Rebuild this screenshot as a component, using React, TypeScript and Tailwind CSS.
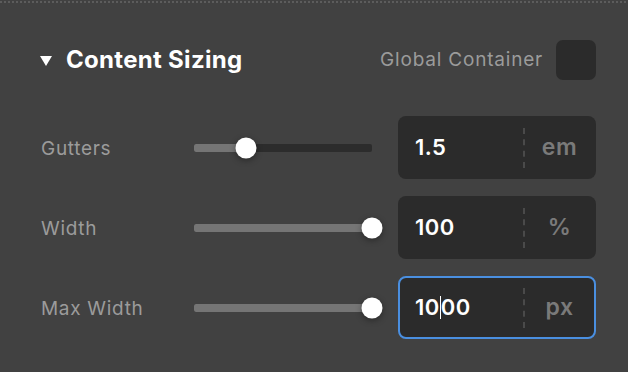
import React from 'react';

const font = { fontFamily: 'Inter, "Liberation Sans", sans-serif' };

type Row = { label: string; value: string; unit: string; pct: number; focused?: boolean };

const rows: Row[] = [
  { label: 'Gutters', value: '1.5', unit: 'em', pct: 29 },
  { label: 'Width', value: '100', unit: '%', pct: 100 },
  { label: 'Max Width', value: '1000', unit: 'px', pct: 100, focused: true },
];

const Slider: React.FC<{ pct: number }> = ({ pct }) => (
  <div className="relative w-[178px] h-[8px] rounded-[2px] bg-[#2c2c2c]">
    <div className="h-full rounded-[2px] bg-[#757575]" style={{ width: `${pct}%` }} />
    <div
      className="absolute top-1/2 w-[21px] h-[21px] -translate-x-1/2 -translate-y-1/2 rounded-full bg-white shadow-[0_2px_6px_rgba(0,0,0,0.35)]"
      style={{ left: `${pct}%` }}
    />
  </div>
);

const App: React.FC = () => {
  return (
    <div className="w-[628px] h-[372px] bg-[#414141] relative overflow-hidden" style={font}>
      {/* linea punteada superior */}
      <div className="h-[4px] pt-[1px]">
        <div className="h-[2px] w-full bg-[repeating-linear-gradient(90deg,#5c5c5c_0_2px,transparent_2px_4px)]" />
      </div>

      <div className="pl-[40px] pr-[32px] pt-[36px]">
        {/* Cabecera */}
        <div className="flex items-center justify-between h-[40px]">
          <div className="flex items-center gap-[14px]">
            <svg width="12" height="10" viewBox="0 0 12 10" className="mt-[1px]">
              <polygon points="0,0 12,0 6,10" fill="#ffffff" />
            </svg>
            <span className="text-white text-[24px] font-bold tracking-[0.3px]">Content Sizing</span>
          </div>
          <div className="flex items-center gap-[13px]">
            <span className="text-[#9b9b9b] text-[19px] tracking-[0.8px]">Global Container</span>
            <div className="w-[40px] h-[40px] rounded-[7px] bg-[#2b2b2b]" />
          </div>
        </div>

        {/* Filas */}
        <div className="mt-[36px] flex flex-col gap-[17px]">
          {rows.map((r) => (
            <div key={r.label} className="flex items-center h-[63px]">
              <span className="w-[154px] pl-[1px] pt-[4px] text-[#9b9b9b] text-[19px] tracking-[0.7px]">{r.label}</span>
              <Slider pct={r.pct} />
              <div
                className={
                  r.focused
                    ? 'ml-[26px] w-[198px] h-[63px] rounded-[8px] bg-[#2b2b2b] border-2 border-[#4a8fe0] flex items-center'
                    : 'ml-[26px] w-[198px] h-[63px] rounded-[8px] bg-[#2b2b2b] border-2 border-transparent flex items-center'
                }
              >
                <div className="w-[123px] pl-[15px] text-white text-[22px] font-semibold tracking-[0.5px] flex items-center">
                  {r.focused ? (
                    <>
                      <span>10</span>
                      <span className="w-[1px] h-[23px] bg-white" />
                      <span>00</span>
                    </>
                  ) : (
                    <span>{r.value}</span>
                  )}
                </div>
                <div className="w-0 h-[40px] border-l-2 border-dashed border-[#4a4a4a]" />
                <div className="flex-1 text-center text-[#7a7a7a] text-[23px] font-semibold tracking-[0.5px]">{r.unit}</div>
              </div>
            </div>
          ))}
        </div>
      </div>
    </div>
  );
};

export default App;
